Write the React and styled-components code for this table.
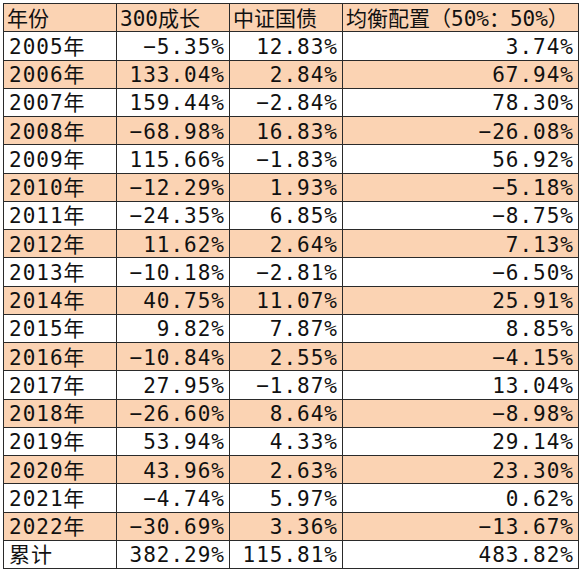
import React from "react";
import styled, { createGlobalStyle } from "styled-components";

const rows = [
  ["2005年", "−5.35%", "12.83%", "3.74%"],
  ["2006年", "133.04%", "2.84%", "67.94%"],
  ["2007年", "159.44%", "−2.84%", "78.30%"],
  ["2008年", "−68.98%", "16.83%", "−26.08%"],
  ["2009年", "115.66%", "−1.83%", "56.92%"],
  ["2010年", "−12.29%", "1.93%", "−5.18%"],
  ["2011年", "−24.35%", "6.85%", "−8.75%"],
  ["2012年", "11.62%", "2.64%", "7.13%"],
  ["2013年", "−10.18%", "−2.81%", "−6.50%"],
  ["2014年", "40.75%", "11.07%", "25.91%"],
  ["2015年", "9.82%", "7.87%", "8.85%"],
  ["2016年", "−10.84%", "2.55%", "−4.15%"],
  ["2017年", "27.95%", "−1.87%", "13.04%"],
  ["2018年", "−26.60%", "8.64%", "−8.98%"],
  ["2019年", "53.94%", "4.33%", "29.14%"],
  ["2020年", "43.96%", "2.63%", "23.30%"],
  ["2021年", "−4.74%", "5.97%", "0.62%"],
  ["2022年", "−30.69%", "3.36%", "−13.67%"],
  ["累计", "382.29%", "115.81%", "483.82%"],
];

const GlobalStyle = createGlobalStyle`
  html, body {
    margin: 0;
    padding: 0;
    background: #fff;
  }
`;

const Sheet = styled.div`
  width: 583px;
  height: 573px;
  padding: 3px 0 0 3px;
  box-sizing: border-box;
  background: #fff;
`;

const Table = styled.table`
  border-collapse: collapse;
  table-layout: fixed;
  width: 575px;
  font-family: "DejaVu Sans Mono", "Noto Sans CJK SC", monospace;
  font-size: 21px;
  color: #111;
`;

const Row = styled.tr`
  height: 28.25px;
  background: ${(p) => (p.$shaded ? "#fbd3b3" : "#fff")};
`;

const Cell = styled.td`
  border: 1px solid #2a2a2a;
  padding: 2px ${(p) => (p.$num ? "4px" : "2px")} 0 ${(p) => (p.$head ? "3px" : "5px")};
  text-align: ${(p) => (p.$num ? "right" : "left")};
  letter-spacing: ${(p) => (p.$head ? "0" : "1px")};
  white-space: nowrap;
  overflow: hidden;
  line-height: 24px;
`;

const App = () => {
  return (
    <Sheet>
      <GlobalStyle />
      <Table>
        <colgroup>
          <col style={{ width: 113 }} />
          <col style={{ width: 113 }} />
          <col style={{ width: 113 }} />
          <col style={{ width: 236 }} />
        </colgroup>
        <tbody>
          <Row $shaded>
            <Cell $head>年份</Cell>
            <Cell $head>300成长</Cell>
            <Cell $head>中证国债</Cell>
            <Cell $head>均衡配置（50%：50%）</Cell>
          </Row>
          {rows.map((r, i) => (
            <Row key={r[0]} $shaded={i % 2 === 1}>
              <Cell>{r[0]}</Cell>
              <Cell $num>{r[1]}</Cell>
              <Cell $num>{r[2]}</Cell>
              <Cell $num>{r[3]}</Cell>
            </Row>
          ))}
        </tbody>
      </Table>
    </Sheet>
  );
};

export default App;
